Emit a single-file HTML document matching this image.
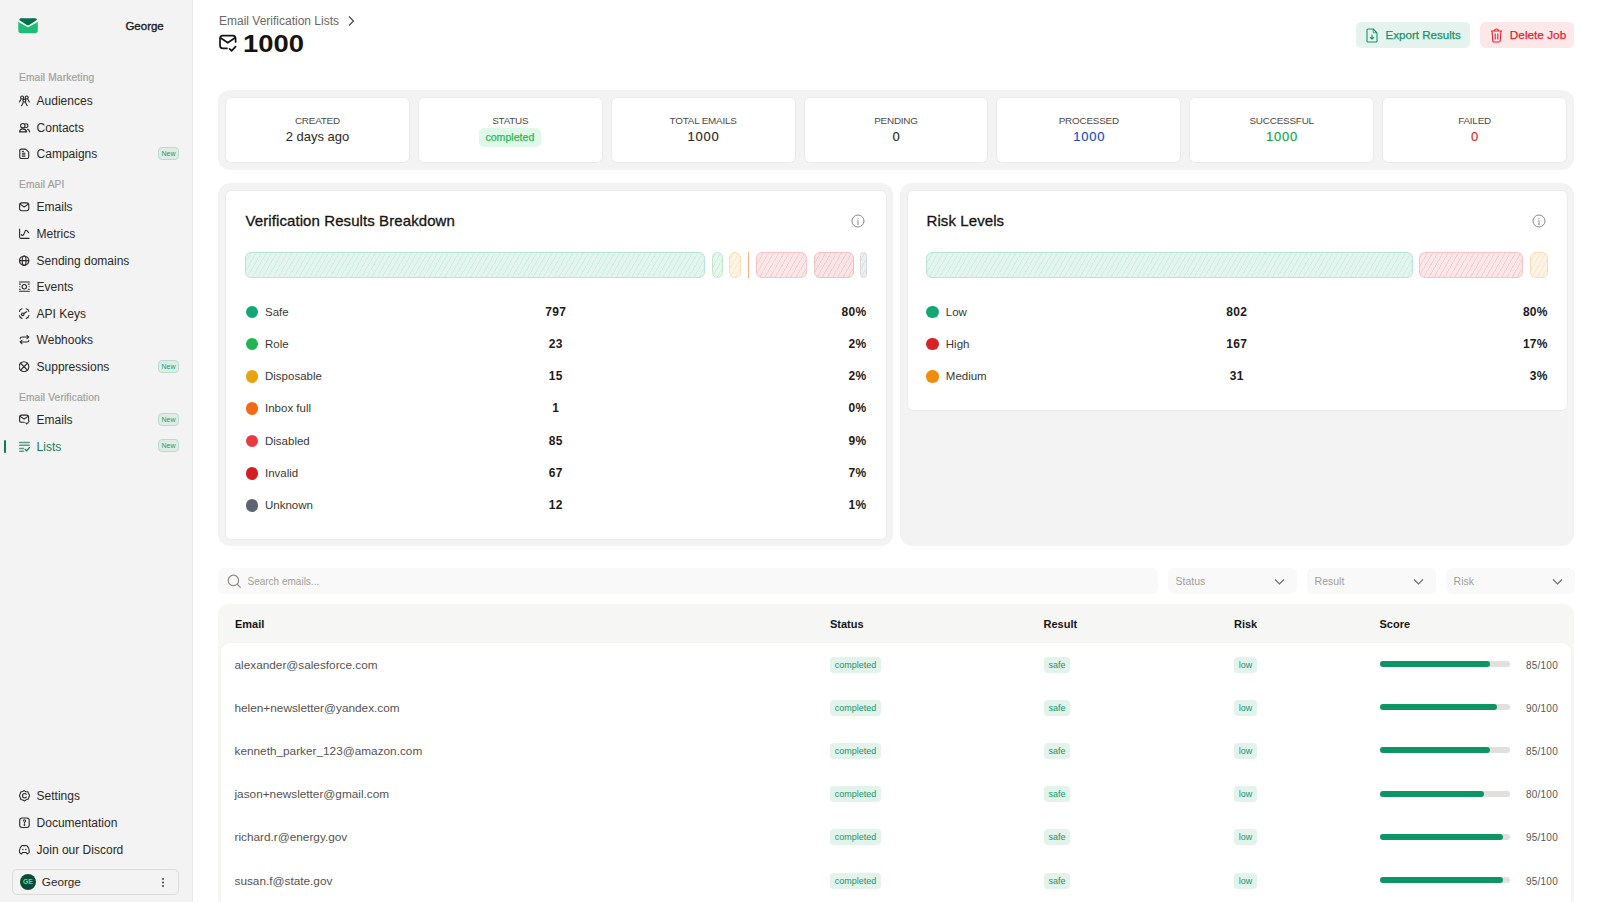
<!DOCTYPE html>
<html><head><meta charset="utf-8">
<style>
*{box-sizing:border-box;margin:0;padding:0}
html,body{width:1600px;height:902px;overflow:hidden;background:#fff;font-family:"Liberation Sans",sans-serif;color:#1c1b1a}
.abs{position:absolute}
#side{position:absolute;left:0;top:0;width:193px;height:902px;background:#f3f3f3;border-right:1px solid #e9e8e7}
.nav{position:absolute;left:0;width:192px;height:20px;font-size:12px;line-height:20px;color:#2a2827}
.nav .ic{position:absolute;left:19px;top:4px;width:12px;height:12px}
.nav .tx{position:absolute;left:36.6px;top:0}
.sec{position:absolute;left:19px;font-size:10.2px;color:#a29f9c;line-height:14px;-webkit-text-stroke:0.2px #a29f9c;margin-top:1px;letter-spacing:0.15px}
.new{position:absolute;left:158px;top:2.7px;width:21px;height:13px;border:1px solid #b8ddcd;background:#ddede6;border-radius:4px;font-size:7px;line-height:11px;color:#18986d;text-align:center}
svg{display:block}
.card{background:#fff;border-radius:6px;box-shadow:inset 0 0 0 1px #ebeae9}
.lab{font-size:9.9px;line-height:12px;color:#4d4946;text-align:center;letter-spacing:-0.2px;margin-top:0.5px}
.val{font-size:13px;line-height:16px;text-align:center;margin-top:1px}
.ctitle{font-size:15px;line-height:18px;color:#151413;-webkit-text-stroke:0.3px #151413;letter-spacing:0.09px}
.seg{border-radius:6px;border:1px solid}
.seg.g{border-color:#b8e4d3;background:repeating-linear-gradient(-60deg,#e4f5ef 0 3.6px,#cdeee1 3.6px 4.5px)}
.seg.g2{border-color:#c2e7cb;background:repeating-linear-gradient(-60deg,#e7f7eb 0 3.6px,#d0efd8 3.6px 4.5px)}
.seg.y{border-color:#f8dfb2;background:repeating-linear-gradient(-60deg,#fef5e4 0 3.6px,#fae8c8 3.6px 4.5px)}
.seg.o{border:none;background:#f6b37f;border-radius:1px}
.seg.r{border-color:#f5c4c6;background:repeating-linear-gradient(-60deg,#fbe7e8 0 3.6px,#f4cfd1 3.6px 4.5px)}
.seg.r2{border-color:#f0c0c3;background:repeating-linear-gradient(-60deg,#fae5e6 0 3.6px,#f2cdcf 3.6px 4.5px)}
.seg.gr{border-color:#d8d9dd;background:repeating-linear-gradient(-60deg,#eeeff1 0 3.6px,#dcdde1 3.6px 4.5px);border-radius:4px}
.seg.y2{border-color:#f9dcb0;background:repeating-linear-gradient(-60deg,#fff4e5 0 3.6px,#fbe6c9 3.6px 4.5px)}
.dot{width:12.5px;height:12.5px;border-radius:50%}
.leg{font-size:11.5px;line-height:16px;color:#3a3735}
.legn{font-size:12px;line-height:16px;color:#1c1b1a;font-weight:700;letter-spacing:0.3px}
.th{font-size:11px;line-height:16px;color:#151413;font-weight:700}
.em{font-size:11.8px;line-height:16px;color:#57524f}
.bdg{height:16px;border-radius:4px;background:#e2f3ec;color:#18946a;font-size:9px;line-height:16px;text-align:center}
.sc{font-size:10px;line-height:14px;color:#5a5552;text-align:right;letter-spacing:0.25px;margin-top:1.2px}

</style></head><body>
<div id="side">
  <!-- logo -->
  <svg class="abs" style="left:18px;top:18px" width="20" height="16" viewBox="0 0 20 16">
    <path d="M0.3 3.9 L10 9.3 L19.8 3.9 L19.8 12.3 Q19.8 15.3 16.8 15.3 L3.3 15.3 Q0.3 15.3 0.3 12.3 Z" fill="#1cbd79"/>
    <path d="M1.3 1.9 Q0.9 0.2 2.8 0.2 L17.3 0.2 Q19.2 0.2 18.8 1.9 L11.2 6.9 Q10 7.6 8.8 6.9 Z" fill="#06704d"/>
  </svg>
  <div class="abs" style="left:125.4px;top:17.5px;font-size:11.5px;line-height:16px;color:#1c1b1a;font-weight:400;-webkit-text-stroke:0.35px #1c1b1a">George</div>

  <div class="sec" style="top:70px">Email Marketing</div>
  <div class="nav" style="top:91px"><svg class="ic" viewBox="0 0 12 12" fill="none" stroke="#2a2827" stroke-width="1.1" stroke-linecap="round" stroke-linejoin="round"><circle cx="3.1" cy="2.5" r="1.5"/><circle cx="7.7" cy="2.5" r="1.5"/><circle cx="5.4" cy="5.6" r="1.5"/><path d="M0.4 7 L1.9 4.4 M4.3 4.4 L4.5 4.6 M6.5 4.4 L6.3 4.6 M8.9 4.4 L10.4 7 M2.6 10.7 L4.2 7.6 M6.6 7.6 L8.2 10.7"/></svg><span class="tx">Audiences</span></div>
  <div class="nav" style="top:117.7px"><svg class="ic" viewBox="0 0 12 12" fill="none" stroke="#2a2827" stroke-width="1.1" stroke-linecap="round" stroke-linejoin="round"><circle cx="3.8" cy="3.7" r="2.2"/><path d="M6.3 1.9 A1.9 1.9 0 1 1 6.6 5.5"/><path d="M0.6 9.9 Q0.8 6.9 3.8 6.9 Q6.8 6.9 7.6 9.9 Z"/><path d="M8.4 7.2 Q10.3 7.4 10.5 9.9"/></svg><span class="tx">Contacts</span></div>
  <div class="nav" style="top:144.3px"><svg class="ic" viewBox="0 0 12 12" fill="none" stroke="#2a2827" stroke-width="1.1" stroke-linecap="round" stroke-linejoin="round"><path d="M2.4 1.1 L6.6 1.1 L9.7 4.2 L9.7 8.9 Q9.7 10.5 8.1 10.5 L2.4 10.5 Q0.8 10.5 0.8 8.9 L0.8 2.7 Q0.8 1.1 2.4 1.1 Z"/><path d="M3.3 3.4 L4.6 3.4 M3.3 5.2 L6 5.2 M3.3 6.8 L6 6.8 M3.3 8.3 L6 8.3" stroke-width="1"/></svg><span class="tx">Campaigns</span><div class="new">New</div></div>

  <div class="sec" style="top:177px">Email API</div>
  <div class="nav" style="top:197.4px"><svg class="ic" viewBox="0 0 12 12" fill="none" stroke="#2a2827" stroke-width="1.1" stroke-linecap="round" stroke-linejoin="round"><rect x="0.6" y="1.9" width="9.2" height="7.9" rx="2.2"/><path d="M1.5 3.4 L5.2 6 L8.9 3.4"/></svg><span class="tx">Emails</span></div>
  <div class="nav" style="top:224px"><svg class="ic" viewBox="0 0 12 12" fill="none" stroke="#2a2827" stroke-width="1.1" stroke-linecap="round" stroke-linejoin="round"><path d="M0.6 1 L0.6 9 Q0.6 10.4 2 10.4 L10 10.4"/><path d="M2.3 6.6 Q3.3 8 4.3 7 Q5.3 5.6 6 3.4 Q6.8 1.6 7.9 2.6 L9.6 4.6"/></svg><span class="tx">Metrics</span></div>
  <div class="nav" style="top:250.6px"><svg class="ic" viewBox="0 0 12 12" fill="none" stroke="#2a2827" stroke-width="1.1" stroke-linecap="round" stroke-linejoin="round"><circle cx="5.15" cy="5.65" r="4.7"/><path d="M0.6 5.65 L9.7 5.65"/><ellipse cx="5.15" cy="5.65" rx="1.9" ry="4.7"/></svg><span class="tx">Sending domains</span></div>
  <div class="nav" style="top:277.2px"><svg class="ic" viewBox="0 0 12 12" fill="none" stroke="#2a2827" stroke-width="1.1" stroke-linecap="round" stroke-linejoin="round"><path d="M0.4 1.05 L10.3 1.05 M0.4 10.3 L10.3 10.3 M0.4 3.1 L1.4 3.1 M9.3 3.1 L10.3 3.1 M0.4 8.3 L1.4 8.3 M9.3 8.3 L10.3 8.3"/><circle cx="5.3" cy="5.75" r="2.2"/><path d="M0.4 5.7 L1 5.7 M9.7 5.7 L10.3 5.7" stroke-width="0.7"/></svg><span class="tx">Events</span></div>
  <div class="nav" style="top:303.8px"><svg class="ic" viewBox="0 0 12 12" fill="none" stroke="#2a2827" stroke-width="1.1" stroke-linecap="round" stroke-linejoin="round"><path d="M0.5 3.4 Q0.8 1.2 3 0.7 M7.2 0.7 Q9.5 1.2 9.8 3.4 M9.8 7.6 Q9.5 9.9 7.2 10.4 M3 10.4 Q0.8 9.9 0.5 7.6"/><circle cx="3.7" cy="6.3" r="1.3"/><path d="M4.8 5.5 L7.6 3.7"/></svg><span class="tx">API Keys</span></div>
  <div class="nav" style="top:330.4px"><svg class="ic" viewBox="0 0 12 12" fill="none" stroke="#2a2827" stroke-width="1.1" stroke-linecap="round" stroke-linejoin="round"><path d="M1.2 4.6 Q1.2 3 3 3 L9.3 3"/><path d="M7.9 1.4 L9.7 3 L7.9 4.6"/><path d="M9.8 6.4 Q9.8 8 8 8 L1.6 8"/><path d="M3 6.4 L1.2 8 L3 9.6"/></svg><span class="tx">Webhooks</span></div>
  <div class="nav" style="top:357px"><svg class="ic" viewBox="0 0 12 12" fill="none" stroke="#2a2827" stroke-width="1.1" stroke-linecap="round" stroke-linejoin="round"><circle cx="5" cy="5.65" r="4.85"/><path d="M1.6 2.25 L8.4 9.05 M8.4 2.25 L1.6 9.05"/></svg><span class="tx">Suppressions</span><div class="new">New</div></div>

  <div class="sec" style="top:390px">Email Verification</div>
  <div class="nav" style="top:410.2px"><svg class="ic" viewBox="0 0 12 12" fill="none" stroke="#2a2827" stroke-width="1.1" stroke-linecap="round" stroke-linejoin="round"><path d="M9.6 6.4 L9.6 3.2 Q9.6 1.1 7.5 1.1 L2.7 1.1 Q0.6 1.1 0.6 3.2 L0.6 6.4 Q0.6 8.3 2.7 8.3 L5.4 8.3"/><path d="M1.5 2.6 L5.1 5 L8.7 2.6"/><path d="M6.8 9 L7.7 10 L10.1 7.4"/></svg><span class="tx">Emails</span><div class="new">New</div></div>
  <div class="abs" style="left:4px;top:440px;width:2px;height:13px;background:#0f7a55;border-radius:1px"></div>
  <div class="nav" style="top:436.8px;color:#13805a"><svg class="ic" viewBox="0 0 12 12" fill="none" stroke-linecap="round" stroke-linejoin="round"><path d="M0.7 1.45 L10.3 1.45 M0.7 4.2 L10.3 4.2 M0.7 7.45 L4.6 7.45 M0.7 10.2 L4.6 10.2" stroke="#5c9d86" stroke-width="1.4"/><path d="M6.2 8.4 L7.6 9.9 L10.4 6.6" stroke="#0f7a53" stroke-width="1.3"/></svg><span class="tx">Lists</span><div class="new">New</div></div>

  <div class="nav" style="top:786.3px"><svg class="ic" viewBox="0 0 12 12" fill="none" stroke="#2a2827" stroke-width="1.1" stroke-linecap="round" stroke-linejoin="round"><path d="M5.2 0.6 L6.9 1.7 L8.9 1.8 L9.6 3.6 L10.6 5.4 L9.9 7.2 L9.3 9 L7.4 9.6 L5.6 10.9 L3.8 10 L1.9 9.5 L1.3 7.6 L0.4 5.7 L1.2 3.9 L1.7 2 L3.6 1.5 Z"/><path d="M7.3 4.4 Q6.6 3.5 5.6 3.5 Q3.5 3.5 3.5 5.75 Q3.5 8 5.6 8 Q6.6 8 7.3 7.1"/></svg><span class="tx">Settings</span></div>
  <div class="nav" style="top:813px"><svg class="ic" viewBox="0 0 12 12" fill="none" stroke="#2a2827" stroke-width="1.1" stroke-linecap="round" stroke-linejoin="round"><rect x="0.7" y="1" width="9.5" height="9.5" rx="2.4"/><path d="M4.3 3.9 Q4.4 2.8 5.45 2.8 Q6.6 2.8 6.6 3.9 Q6.6 4.7 5.45 5.3 L5.45 6.3"/><circle cx="5.45" cy="8" r="0.35" fill="#2a2827"/></svg><span class="tx">Documentation</span></div>
  <div class="nav" style="top:839.7px"><svg class="ic" viewBox="0 0 12 12" fill="none" stroke="#2a2827" stroke-width="1.1" stroke-linecap="round" stroke-linejoin="round"><path d="M2.6 1.8 Q3.8 1.3 4.3 1.6 L6.4 1.6 Q6.9 1.3 8.1 1.8 Q10.2 3.6 10.3 8.3 Q9.3 9.7 8.1 9.9 L7.2 8.5 L3.5 8.5 L2.6 9.9 Q1.4 9.7 0.4 8.3 Q0.5 3.6 2.6 1.8 Z"/><circle cx="3.8" cy="5.6" r="0.75" fill="#2a2827" stroke="none"/><circle cx="6.9" cy="5.6" r="0.75" fill="#2a2827" stroke="none"/></svg><span class="tx">Join our Discord</span></div>

  <div class="abs" style="left:12px;top:869px;width:167px;height:26px;border:1px solid #dddbd9;border-radius:5px;background:#f3f3f3">
    <div class="abs" style="left:6.8px;top:3.6px;width:16px;height:16px;border-radius:50%;background:#0b4c38;color:#52e39b;font-size:6.8px;line-height:16px;text-align:center;font-weight:700">GE</div>
    <div class="abs" style="left:28.8px;top:4px;font-size:11.7px;line-height:16px;color:#2a2827">George</div>
    <div class="abs" style="left:148.7px;top:7.5px;width:2px;height:2px;border-radius:1px;background:#444;box-shadow:0 3.5px 0 #444,0 7px 0 #444"></div>
  </div>
</div>

<div id="main">
  <!-- header -->
  <div class="abs" style="left:219px;top:13px;font-size:12px;line-height:16px;color:#6b6764">Email Verification Lists</div>
  <svg class="abs" style="left:346px;top:15px" width="10" height="12" viewBox="0 0 10 12" fill="none" stroke="#4a4643" stroke-width="1.2"><path d="M3 1.5 L7.5 6 L3 10.5"/></svg>
  <svg class="abs" style="left:219px;top:34px" width="19" height="19" viewBox="0 0 19 19" fill="none" stroke="#151413" stroke-width="1.7" stroke-linecap="round" stroke-linejoin="round"><path d="M16.6 8 L16.6 4.4 Q16.6 1.6 13.8 1.6 L3.8 1.6 Q1 1.6 1 4.4 L1 11.6 Q1 14.4 3.8 14.4 L8 14.4"/><path d="M1.8 4 L8.8 8.8 L15.8 4"/><path d="M10.6 14.8 L12.6 16.8 L16.6 12.6"/></svg>
  <div class="abs" style="left:243px;top:30px;font-size:23px;line-height:28px;font-weight:700;color:#151413;transform:scaleX(1.19);transform-origin:0 0">1000</div>

  <div class="abs" style="left:1356px;top:22px;width:114px;height:26px;background:#e4f3ed;border-radius:5px">
    <svg class="abs" style="left:10px;top:6px" width="12" height="15" viewBox="0 0 12 15" fill="none" stroke="#15936a" stroke-width="1.1" stroke-linejoin="round"><path d="M1.5 1 L7.2 1 L11 4.8 L11 13 Q11 14 10 14 L2 14 Q1 14 1 13 L1 2 Q1 1 2 1"/><path d="M7.2 1 L7.2 4.8 L11 4.8" stroke-width="0.8"/><path d="M6 6.8 L6 11 M4 9.2 L6 11.2 L8 9.2"/></svg>
    <div class="abs" style="left:29.5px;top:6px;font-size:11.6px;line-height:14px;color:#15936a;-webkit-text-stroke:0.25px #15936a;top:6.3px">Export Results</div>
  </div>
  <div class="abs" style="left:1480px;top:22px;width:94px;height:26px;background:#fde8e9;border-radius:5px">
    <svg class="abs" style="left:9.5px;top:5.5px" width="13" height="15" viewBox="0 0 13 15" fill="none" stroke="#ea1c26" stroke-width="1.1" stroke-linejoin="round"><path d="M1 3 L12 3 M4.6 3 Q4.6 1 6.5 1 Q8.4 1 8.4 3"/><path d="M2 3 L2.8 13 Q2.9 14 4 14 L9 14 Q10.1 14 10.2 13 L11 3"/><path d="M5.2 5.5 L5.2 11.5 M7.8 5.5 L7.8 11.5"/></svg>
    <div class="abs" style="left:29.8px;top:6px;font-size:11.8px;line-height:14px;color:#ea1c26;-webkit-text-stroke:0.25px #ea1c26;top:6.3px">Delete Job</div>
  </div>

  <!-- stats -->
  <div class="abs statwrap" style="left:218px;top:90px;width:1356px;height:80px;background:#f3f3f3;border-radius:12px">
  </div>
  <div class="abs card" style="left:225.00px;top:97px;width:184.86px;height:66px"><div class="abs lab" style="left:0;top:17px;width:100%">CREATED</div><div class="abs val" style="left:0;top:31px;width:100%;color:#2a2827;">2 days ago</div></div>
<div class="abs card" style="left:417.86px;top:97px;width:184.86px;height:66px"><div class="abs lab" style="left:0;top:17px;width:100%">STATUS</div><div class="abs" style="left:61px;top:31px;width:62px;height:19px;background:#e0f8e8;border-radius:5px;font-size:10.6px;line-height:19px;color:#1cb64b;text-align:center;-webkit-text-stroke:0.2px #1cb64b">completed</div></div>
<div class="abs card" style="left:610.71px;top:97px;width:184.86px;height:66px"><div class="abs lab" style="left:0;top:17px;width:100%">TOTAL EMAILS</div><div class="abs val" style="left:0;top:31px;width:100%;color:#2a2827;-webkit-text-stroke:0.15px #2a2827;;letter-spacing:0.8px;text-indent:0.8px">1000</div></div>
<div class="abs card" style="left:803.57px;top:97px;width:184.86px;height:66px"><div class="abs lab" style="left:0;top:17px;width:100%">PENDING</div><div class="abs val" style="left:0;top:31px;width:100%;color:#2a2827;-webkit-text-stroke:0.15px #2a2827;;letter-spacing:0.8px;text-indent:0.8px">0</div></div>
<div class="abs card" style="left:996.43px;top:97px;width:184.86px;height:66px"><div class="abs lab" style="left:0;top:17px;width:100%">PROCESSED</div><div class="abs val" style="left:0;top:31px;width:100%;color:#1e48c8;-webkit-text-stroke:0.15px #1e48c8;;letter-spacing:0.8px;text-indent:0.8px">1000</div></div>
<div class="abs card" style="left:1189.28px;top:97px;width:184.86px;height:66px"><div class="abs lab" style="left:0;top:17px;width:100%">SUCCESSFUL</div><div class="abs val" style="left:0;top:31px;width:100%;color:#16a041;-webkit-text-stroke:0.15px #16a041;;letter-spacing:0.8px;text-indent:0.8px">1000</div></div>
<div class="abs card" style="left:1382.14px;top:97px;width:184.86px;height:66px"><div class="abs lab" style="left:0;top:17px;width:100%">FAILED</div><div class="abs val" style="left:0;top:31px;width:100%;color:#dc1f26;-webkit-text-stroke:0.15px #dc1f26;;letter-spacing:0.8px;text-indent:0.8px">0</div></div>


  <!-- charts -->
  <div class="abs" style="left:218px;top:183px;width:675px;height:363px;background:#f3f3f3;border-radius:12px"></div>
  <div class="abs card" style="left:225px;top:190px;width:662px;height:350px"></div>
  <div class="abs" style="left:900px;top:183px;width:674px;height:363px;background:#f3f3f3;border-radius:12px"></div>
  <div class="abs card" style="left:907px;top:190px;width:661px;height:221px"></div>
  <div class="abs ctitle" style="left:245.5px;top:212px">Verification Results Breakdown</div><svg class="abs" style="left:851px;top:214px" width="14" height="14" viewBox="0 0 14 14" fill="none" stroke="#8d8986" stroke-width="1"><circle cx="7" cy="7" r="6"/><path d="M7 6.2 L7 10.2 M6.2 10.2 L7.8 10.2 M6.3 6.2 L7 6.2" stroke-width="0.9"/><circle cx="7" cy="4.2" r="0.55" fill="#8d8986" stroke="none"/></svg><div class="abs seg g" style="left:245.4px;top:252px;width:459.5px;height:26px"></div><div class="abs seg g2" style="left:711.5px;top:252px;width:11.2px;height:26px"></div><div class="abs seg y" style="left:729.3px;top:252px;width:11.7px;height:26px"></div><div class="abs seg o" style="left:747.6px;top:252px;width:1.4px;height:26px"></div><div class="abs seg r" style="left:755.6px;top:252px;width:51.7px;height:26px"></div><div class="abs seg r2" style="left:813.9px;top:252px;width:39.8px;height:26px"></div><div class="abs seg gr" style="left:859.8px;top:252px;width:6.8px;height:26px"></div><div class="abs dot" style="left:245.5px;top:305.5px;background:#14a774"></div><div class="abs leg" style="left:265.0px;top:303.5px">Safe</div><div class="abs legn" style="left:515.7px;width:80px;top:303.5px;text-align:center">797</div><div class="abs legn" style="left:786.5px;width:80px;top:303.5px;text-align:right">80%</div>
<div class="abs dot" style="left:245.5px;top:337.8px;background:#20b455"></div><div class="abs leg" style="left:265.0px;top:335.8px">Role</div><div class="abs legn" style="left:515.7px;width:80px;top:335.8px;text-align:center">23</div><div class="abs legn" style="left:786.5px;width:80px;top:335.8px;text-align:right">2%</div>
<div class="abs dot" style="left:245.5px;top:370.1px;background:#e6a312"></div><div class="abs leg" style="left:265.0px;top:368.1px">Disposable</div><div class="abs legn" style="left:515.7px;width:80px;top:368.1px;text-align:center">15</div><div class="abs legn" style="left:786.5px;width:80px;top:368.1px;text-align:right">2%</div>
<div class="abs dot" style="left:245.5px;top:402.4px;background:#f36a16"></div><div class="abs leg" style="left:265.0px;top:400.4px">Inbox full</div><div class="abs legn" style="left:515.7px;width:80px;top:400.4px;text-align:center">1</div><div class="abs legn" style="left:786.5px;width:80px;top:400.4px;text-align:right">0%</div>
<div class="abs dot" style="left:245.5px;top:434.7px;background:#e83b3f"></div><div class="abs leg" style="left:265.0px;top:432.7px">Disabled</div><div class="abs legn" style="left:515.7px;width:80px;top:432.7px;text-align:center">85</div><div class="abs legn" style="left:786.5px;width:80px;top:432.7px;text-align:right">9%</div>
<div class="abs dot" style="left:245.5px;top:467.0px;background:#d21f24"></div><div class="abs leg" style="left:265.0px;top:465.0px">Invalid</div><div class="abs legn" style="left:515.7px;width:80px;top:465.0px;text-align:center">67</div><div class="abs legn" style="left:786.5px;width:80px;top:465.0px;text-align:right">7%</div>
<div class="abs dot" style="left:245.5px;top:499.3px;background:#5d6472"></div><div class="abs leg" style="left:265.0px;top:497.3px">Unknown</div><div class="abs legn" style="left:515.7px;width:80px;top:497.3px;text-align:center">12</div><div class="abs legn" style="left:786.5px;width:80px;top:497.3px;text-align:right">1%</div>
<div class="abs ctitle" style="left:926.5px;top:212px">Risk Levels</div><svg class="abs" style="left:1532px;top:214px" width="14" height="14" viewBox="0 0 14 14" fill="none" stroke="#8d8986" stroke-width="1"><circle cx="7" cy="7" r="6"/><path d="M7 6.2 L7 10.2 M6.2 10.2 L7.8 10.2 M6.3 6.2 L7 6.2" stroke-width="0.9"/><circle cx="7" cy="4.2" r="0.55" fill="#8d8986" stroke="none"/></svg><div class="abs seg g" style="left:926.0px;top:252px;width:486.9px;height:26px"></div><div class="abs seg r" style="left:1419.3px;top:252px;width:103.5px;height:26px"></div><div class="abs seg y2" style="left:1529.5px;top:252px;width:18.1px;height:26px"></div><div class="abs dot" style="left:926.3px;top:305.5px;background:#14a774"></div><div class="abs leg" style="left:945.8px;top:303.5px">Low</div><div class="abs legn" style="left:1196.7px;width:80px;top:303.5px;text-align:center">802</div><div class="abs legn" style="left:1467.8px;width:80px;top:303.5px;text-align:right">80%</div>
<div class="abs dot" style="left:926.3px;top:337.8px;background:#d72226"></div><div class="abs leg" style="left:945.8px;top:335.8px">High</div><div class="abs legn" style="left:1196.7px;width:80px;top:335.8px;text-align:center">167</div><div class="abs legn" style="left:1467.8px;width:80px;top:335.8px;text-align:right">17%</div>
<div class="abs dot" style="left:926.3px;top:370.1px;background:#f28c0f"></div><div class="abs leg" style="left:945.8px;top:368.1px">Medium</div><div class="abs legn" style="left:1196.7px;width:80px;top:368.1px;text-align:center">31</div><div class="abs legn" style="left:1467.8px;width:80px;top:368.1px;text-align:right">3%</div>


  <!-- filters -->
  <div class="abs" style="left:218px;top:568px;width:940px;height:26px;background:#f9f9f9;border-radius:6px"></div>
  <svg class="abs" style="left:227px;top:574px" width="15" height="15" viewBox="0 0 15 15" fill="none" stroke="#8f8a86" stroke-width="1.2"><circle cx="6.4" cy="6.4" r="5.2"/><path d="M10.2 10.2 L13.6 13.6"/></svg>
  <div class="abs" style="left:247.5px;top:575px;font-size:10px;line-height:13px;color:#a29e9a">Search emails...</div>
  <div class="abs" style="left:1168px;top:568px;width:129px;height:26px;background:#f9f9f9;border-radius:6px"><div class="abs" style="left:7.6px;top:7.2px;font-size:10.5px;line-height:13px;color:#a29e9a">Status</div><svg class="abs" style="left:106.3px;top:10px" width="11" height="8" viewBox="0 0 11 8" fill="none" stroke="#6f6b68" stroke-width="1.1"><path d="M1 1.5 L5.5 6 L10 1.5"/></svg></div><div class="abs" style="left:1307px;top:568px;width:129px;height:26px;background:#f9f9f9;border-radius:6px"><div class="abs" style="left:7.6px;top:7.2px;font-size:10.5px;line-height:13px;color:#a29e9a">Result</div><svg class="abs" style="left:106.3px;top:10px" width="11" height="8" viewBox="0 0 11 8" fill="none" stroke="#6f6b68" stroke-width="1.1"><path d="M1 1.5 L5.5 6 L10 1.5"/></svg></div><div class="abs" style="left:1446px;top:568px;width:129px;height:26px;background:#f9f9f9;border-radius:6px"><div class="abs" style="left:7.6px;top:7.2px;font-size:10.5px;line-height:13px;color:#a29e9a">Risk</div><svg class="abs" style="left:106.3px;top:10px" width="11" height="8" viewBox="0 0 11 8" fill="none" stroke="#6f6b68" stroke-width="1.1"><path d="M1 1.5 L5.5 6 L10 1.5"/></svg></div>

  <!-- table -->
  <div class="abs" style="left:218px;top:604px;width:1356px;height:310px;background:#f6f6f5;border-radius:10px"></div>
  <div class="abs" style="left:220.5px;top:643px;width:1350.5px;height:270px;background:#fff;border-radius:9px;box-shadow:0 0 0 0.5px #efefee"></div>
  <div class="abs th" style="left:235px;top:616px">Email</div><div class="abs th" style="left:830px;top:616px">Status</div><div class="abs th" style="left:1043.5px;top:616px">Result</div><div class="abs th" style="left:1234px;top:616px">Risk</div><div class="abs th" style="left:1379.5px;top:616px">Score</div>
  <div class="abs em" style="left:234.5px;top:656.5px">alexander@salesforce.com</div><div class="abs bdg" style="left:830px;top:656.5px;width:51px">completed</div><div class="abs bdg" style="left:1044px;top:656.5px;width:26px">safe</div><div class="abs bdg" style="left:1234px;top:656.5px;width:23px">low</div><div class="abs" style="left:1379.5px;top:661.5px;width:130px;height:6px;border-radius:3px;background:#e2e0df;margin-top:-0.5px"><div style="width:85%;height:6px;border-radius:3px;background:#0e9566"></div></div><div class="abs sc" style="left:1520px;top:657.5px;width:38px">85/100</div>
<div class="abs em" style="left:234.5px;top:699.7px">helen+newsletter@yandex.com</div><div class="abs bdg" style="left:830px;top:699.7px;width:51px">completed</div><div class="abs bdg" style="left:1044px;top:699.7px;width:26px">safe</div><div class="abs bdg" style="left:1234px;top:699.7px;width:23px">low</div><div class="abs" style="left:1379.5px;top:704.7px;width:130px;height:6px;border-radius:3px;background:#e2e0df;margin-top:-0.5px"><div style="width:90%;height:6px;border-radius:3px;background:#0e9566"></div></div><div class="abs sc" style="left:1520px;top:700.7px;width:38px">90/100</div>
<div class="abs em" style="left:234.5px;top:742.9px">kenneth_parker_123@amazon.com</div><div class="abs bdg" style="left:830px;top:742.9px;width:51px">completed</div><div class="abs bdg" style="left:1044px;top:742.9px;width:26px">safe</div><div class="abs bdg" style="left:1234px;top:742.9px;width:23px">low</div><div class="abs" style="left:1379.5px;top:747.9px;width:130px;height:6px;border-radius:3px;background:#e2e0df;margin-top:-0.5px"><div style="width:85%;height:6px;border-radius:3px;background:#0e9566"></div></div><div class="abs sc" style="left:1520px;top:743.9px;width:38px">85/100</div>
<div class="abs em" style="left:234.5px;top:786.1px">jason+newsletter@gmail.com</div><div class="abs bdg" style="left:830px;top:786.1px;width:51px">completed</div><div class="abs bdg" style="left:1044px;top:786.1px;width:26px">safe</div><div class="abs bdg" style="left:1234px;top:786.1px;width:23px">low</div><div class="abs" style="left:1379.5px;top:791.1px;width:130px;height:6px;border-radius:3px;background:#e2e0df;margin-top:-0.5px"><div style="width:80%;height:6px;border-radius:3px;background:#0e9566"></div></div><div class="abs sc" style="left:1520px;top:787.1px;width:38px">80/100</div>
<div class="abs em" style="left:234.5px;top:829.3px">richard.r@energy.gov</div><div class="abs bdg" style="left:830px;top:829.3px;width:51px">completed</div><div class="abs bdg" style="left:1044px;top:829.3px;width:26px">safe</div><div class="abs bdg" style="left:1234px;top:829.3px;width:23px">low</div><div class="abs" style="left:1379.5px;top:834.3px;width:130px;height:6px;border-radius:3px;background:#e2e0df;margin-top:-0.5px"><div style="width:95%;height:6px;border-radius:3px;background:#0e9566"></div></div><div class="abs sc" style="left:1520px;top:830.3px;width:38px">95/100</div>
<div class="abs em" style="left:234.5px;top:872.5px">susan.f@state.gov</div><div class="abs bdg" style="left:830px;top:872.5px;width:51px">completed</div><div class="abs bdg" style="left:1044px;top:872.5px;width:26px">safe</div><div class="abs bdg" style="left:1234px;top:872.5px;width:23px">low</div><div class="abs" style="left:1379.5px;top:877.5px;width:130px;height:6px;border-radius:3px;background:#e2e0df;margin-top:-0.5px"><div style="width:95%;height:6px;border-radius:3px;background:#0e9566"></div></div><div class="abs sc" style="left:1520px;top:873.5px;width:38px">95/100</div>

</div>
</body></html>
